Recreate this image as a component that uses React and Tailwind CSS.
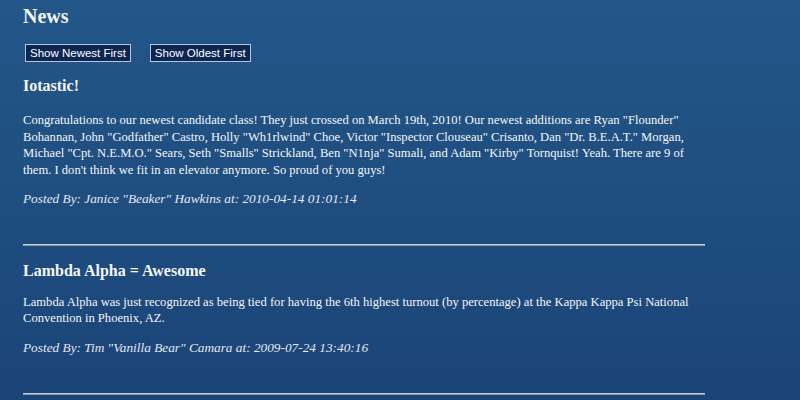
export default function App() {
  const serif = { fontFamily: '"Liberation Serif", "Times New Roman", serif' };
  return (
    <div
      className="h-[400px] w-full overflow-hidden bg-gradient-to-b from-[#235789] to-[#1b4477] pl-[23px] pr-[95px] pt-[5px] text-[#f4f6f8]"
      style={serif}
    >
      <h1 className="text-[20px] font-bold leading-[23px]">News</h1>
      <div className="mt-[16px] flex gap-[19px] pl-[2px]">
        <button className="h-[18px] border border-[#b9c6d8] bg-[#0e2654] px-[4px] text-[11.5px] leading-[14px] text-white [font-family:'Liberation_Sans',Arial,sans-serif]">
          Show Newest First
        </button>
        <button className="h-[18px] border border-[#b9c6d8] bg-[#0e2654] px-[4px] text-[11.5px] leading-[14px] text-white [font-family:'Liberation_Sans',Arial,sans-serif]">
          Show Oldest First
        </button>
      </div>

      <h2 className="mt-[15px] text-[16px] font-bold leading-[18px]">Iotastic!</h2>
      <p className="mt-[17px] text-[12.6px] leading-[16.7px]">
        Congratulations to our newest candidate class! They just crossed on March 19th, 2010! Our newest additions are Ryan "Flounder" Bohannan, John "Godfather" Castro, Holly "Wh1rlwind" Choe, Victor "Inspector Clouseau" Crisanto, Dan "Dr. B.E.A.T." Morgan, Michael "Cpt. N.E.M.O." Sears, Seth "Smalls" Strickland, Ben "N1nja" Sumali, and Adam "Kirby" Tornquist! Yeah. There are 9 of them. I don't think we fit in an elevator anymore. So proud of you guys!
      </p>
      <p className="mt-[12px] text-[13.3px] italic leading-[16.7px] text-[#e4e9f0]">
        Posted By: Janice "Beaker" Hawkins at: 2010-04-14 01:01:14
      </p>
      <div className="mt-[36px] h-[2px] w-[682px] border-t border-[#c8c8c8] border-b border-b-[#8a9bb0]" />

      <h2 className="mt-[16px] text-[16px] font-bold leading-[18px]">Lambda Alpha = Awesome</h2>
      <p className="mt-[14px] text-[12.6px] leading-[16.7px]">
        Lambda Alpha was just recognized as being tied for having the 6th highest turnout (by percentage) at the Kappa Kappa Psi National Convention in Phoenix, AZ.
      </p>
      <p className="mt-[13px] text-[13.3px] italic leading-[16.7px] text-[#e4e9f0]">
        Posted By: Tim "Vanilla Bear" Camara at: 2009-07-24 13:40:16
      </p>
      <div className="mt-[36px] h-[2px] w-[682px] border-t border-[#c8c8c8] border-b border-b-[#8a9bb0]" />
    </div>
  );
}
